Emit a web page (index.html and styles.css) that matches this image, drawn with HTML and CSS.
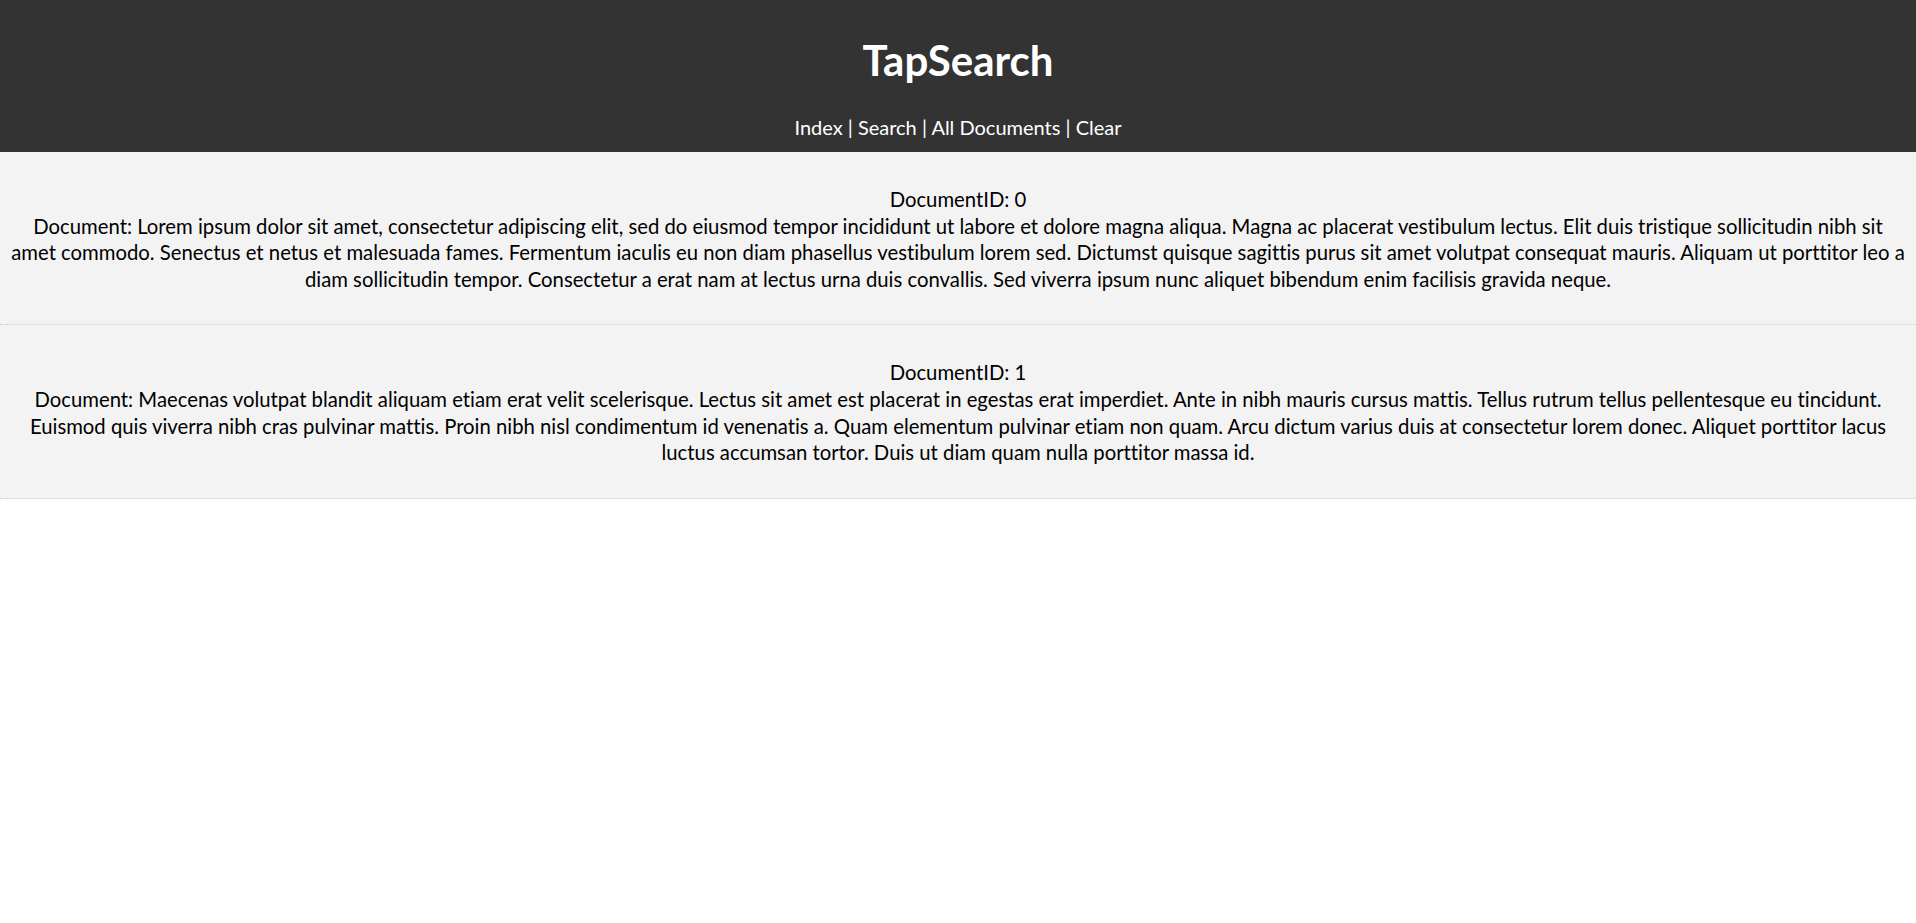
FILE: index.html
```html
<!DOCTYPE html>
<html lang="en">
<head>
<meta charset="utf-8">
<title>TapSearch</title>
<link rel="stylesheet" href="styles.css">
</head>
<body>
<header class="site-header">
  <h1 class="site-title">TapSearch</h1>
  <nav class="site-nav"><a href="#">Index</a> | <a href="#">Search</a> | <a href="#">All Documents</a> | <a href="#">Clear</a></nav>
</header>
<main class="doc-list">
  <div class="doc">DocumentID: 0<br>Document: Lorem ipsum dolor sit amet, consectetur adipiscing elit, sed do eiusmod tempor incididunt ut labore et dolore magna aliqua. Magna ac placerat vestibulum lectus. Elit duis tristique sollicitudin nibh sit amet commodo. Senectus et netus et malesuada fames. Fermentum iaculis eu non diam phasellus vestibulum lorem sed. Dictumst quisque sagittis purus sit amet volutpat consequat mauris. Aliquam ut porttitor leo a diam sollicitudin tempor. Consectetur a erat nam at lectus urna duis convallis. Sed viverra ipsum nunc aliquet bibendum enim facilisis gravida neque.</div>
  <div class="doc">DocumentID: 1<br>Document: Maecenas volutpat blandit aliquam etiam erat velit scelerisque. Lectus sit amet est placerat in egestas erat imperdiet. Ante in nibh mauris cursus mattis. Tellus rutrum tellus pellentesque eu tincidunt. Euismod quis viverra nibh cras pulvinar mattis. Proin nibh nisl condimentum id venenatis a. Quam elementum pulvinar etiam non quam. Arcu dictum varius duis at consectetur lorem donec. Aliquet porttitor lacus luctus accumsan tortor. Duis ut diam quam nulla porttitor massa id.</div>
</main>
</body>
</html>
```
FILE: styles.css
```css
html, body {
  margin: 0;
  padding: 0;
  background: #ffffff;
}
body {
  font-family: "Lato", "Open Sans", sans-serif;
  font-size: 20.3px;
  line-height: 26.6px;
  color: #000000;
  font-variant-ligatures: none;
}
.site-header {
  background: #333333;
  color: #ffffff;
  text-align: center;
  padding: 7px 0 12px;
}
.site-title {
  margin: 27px 0;
  font-size: 42px;
  line-height: 53px;
  font-weight: 700;
}
.site-nav {
  font-size: 20px;
  line-height: 26px;
}
.site-nav a {
  color: #ffffff;
  text-decoration: none;
}
.doc {
  background: #f3f3f3;
  text-align: center;
  padding: 34px 9px 32px;
  border-bottom: 1px dotted #cccccc;
}
```
